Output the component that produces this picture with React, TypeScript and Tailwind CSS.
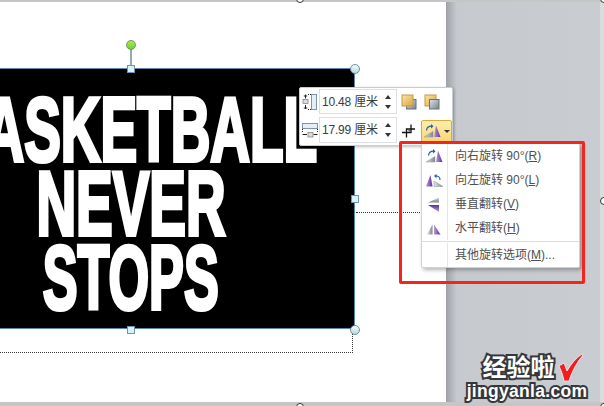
import React from "react";

const uiFont = { fontFamily: '"Liberation Sans", "Noto Sans CJK SC", sans-serif' };

const rampGray = "url(#rampGray)";
const rampPurple = "url(#rampPurple)";

function Defs() {
  return (
    <svg width="0" height="0" className="absolute">
      <defs>
        <linearGradient id="rampGray" x1="0" y1="0" x2="1" y2="0">
          <stop offset="0" stopColor="#e2e6ea" />
          <stop offset="1" stopColor="#7d8690" />
        </linearGradient>
        <linearGradient id="rampPurple" x1="0" y1="0" x2="1" y2="0">
          <stop offset="0" stopColor="#b89ad8" />
          <stop offset="1" stopColor="#5b2f96" />
        </linearGradient>
        <linearGradient id="rampGrayV" x1="0" y1="0" x2="0" y2="1">
          <stop offset="0" stopColor="#d8dce0" />
          <stop offset="1" stopColor="#7d8690" />
        </linearGradient>
        <linearGradient id="rampPurpleV" x1="0" y1="0" x2="0" y2="1">
          <stop offset="0" stopColor="#5b2f96" />
          <stop offset="1" stopColor="#c0a4dc" />
        </linearGradient>
        <linearGradient id="goldBox" x1="0" y1="0" x2="1" y2="1">
          <stop offset="0" stopColor="#fbe6a6" />
          <stop offset="1" stopColor="#d9a441" />
        </linearGradient>
        <linearGradient id="steelBox" x1="0" y1="0" x2="1" y2="1">
          <stop offset="0" stopColor="#dfe3e8" />
          <stop offset="1" stopColor="#76818e" />
        </linearGradient>
      </defs>
    </svg>
  );
}

function RotateRight() {
  return (
    <svg width="18" height="16" viewBox="0 0 18 16">
      <path d="M0 14h9V8.500z" fill={rampGray} stroke="#8a929a" strokeWidth="0.5" />
      <path d="M10 14h6.500L12 2.500z" fill={rampPurple} />
      <path d="M2.500 7.500C2.800 4.500 5 3.200 7.500 3.200" fill="none" stroke="#1f5fae" strokeWidth="1.200" />
      <path d="M7 1l2.500 2.200L7 5.400z" fill="#1f5fae" />
    </svg>
  );
}

function RotateLeft() {
  return (
    <svg width="18" height="16" viewBox="0 0 18 16">
      <path d="M0 14.500h6.500L4.500 3z" fill={rampPurple} />
      <path d="M8 14.500h9L8 9z" fill={rampGray} stroke="#8a929a" strokeWidth="0.5" />
      <path d="M14 8C14 5 12.500 4 10 4" fill="none" stroke="#1f5fae" strokeWidth="1.200" />
      <path d="M10.500 1.800L8 4l2.500 2.200z" fill="#1f5fae" />
    </svg>
  );
}

function FlipVertical() {
  return (
    <svg width="18" height="16" viewBox="0 0 18 16">
      <path d="M2 6.500h11V1.500z" fill="url(#rampGrayV)" />
      <path d="M2 9h11v7z" fill="url(#rampPurpleV)" />
    </svg>
  );
}

function FlipHorizontal() {
  return (
    <svg width="18" height="16" viewBox="0 0 18 16">
      <path d="M1 14.500h5.500V4.500z" fill={rampGray} />
      <path d="M8 14.500h6.500L8 4.500z" fill="url(#rampPurple)" />
    </svg>
  );
}

function HeightIcon() {
  return (
    <svg width="15" height="16" viewBox="0 0 15 16">
      <rect x="9.500" y="0.500" width="5" height="15" fill="#e4eef8" stroke="#7f93aa" />
      <rect x="1" y="5.500" width="5" height="4" fill="#dcdcdc" stroke="#777" strokeWidth="0.7" />
      <path d="M3.500 0.500v4M1.800 2h3.400M3.500 11v4M1.800 14h3.400" stroke="#222" strokeWidth="1" />
      <path d="M6 0.500h3M6 15.500h3" stroke="#222" strokeWidth="1" strokeDasharray="1 1" />
    </svg>
  );
}

function WidthIcon() {
  return (
    <svg width="16" height="15" viewBox="0 0 16 15">
      <rect x="0.500" y="0.500" width="15" height="5" fill="#e4eef8" stroke="#7f93aa" />
      <rect x="6" y="9.500" width="5" height="4.500" fill="#dcdcdc" stroke="#777" strokeWidth="0.7" />
      <path d="M0.500 11.500h4.500M11.500 11.500h4" stroke="#222" strokeWidth="1" />
      <path d="M0.500 6v4M15.500 6v4" stroke="#222" strokeWidth="1" strokeDasharray="1 1" />
    </svg>
  );
}

function LayerIcon({ front }: { front: "gold" | "steel" }) {
  const gold = <rect x="1" y="1" width="11" height="11" fill="url(#goldBox)" stroke="#c49a45" />;
  const steel = <rect x="5.500" y="5.500" width="9.500" height="9.500" fill="url(#steelBox)" stroke="#66717e" />;
  return (
    <svg width="16" height="16" viewBox="0 0 16 16">
      {front === "gold" ? steel : gold}
      {front === "gold" ? gold : steel}
    </svg>
  );
}

function CropIcon() {
  return (
    <svg width="14" height="14" viewBox="0 0 14 14">
      <path d="M0 8.500h9V0.500M4.500 13.500V5H13" fill="none" stroke="#111" strokeWidth="1.300" />
      <path d="M6.500 5.500h2v2h-2z" fill="#555" />
    </svg>
  );
}

function Spinner() {
  return (
    <div className="flex flex-col items-center justify-center gap-[6px] w-[12px] mr-[2px]">
      <span className="w-0 h-0 border-x-[3px] border-x-transparent border-b-[4px] border-b-[#333]" />
      <span className="w-0 h-0 border-x-[3px] border-x-transparent border-t-[4px] border-t-[#333]" />
    </div>
  );
}

function SizeRow({ icon, value, h }: { icon: React.ReactNode; value: string; h: string }) {
  return (
    <div className="flex items-center">
      <div className="w-[19px] flex justify-center">{icon}</div>
      <div className={`w-[78px] ${h} border border-[#dcdfe3] flex items-center justify-between pl-[2px]`}>
        <span className="text-[12px] text-[#3b3b3b] whitespace-nowrap tracking-[-0.2px]">{value} 厘米</span>
        <Spinner />
      </div>
    </div>
  );
}

function MenuRow({ icon, label, hot, tail }: { icon: React.ReactNode; label: string; hot: string; tail?: string }) {
  return (
    <div className="flex h-[24px] items-center">
      <div className="w-[25px] flex justify-center shrink-0">{icon}</div>
      <div className="pl-[7px] border-l border-[#e4e6e8] h-full flex items-center text-[12px] text-[#4f4f4f] whitespace-nowrap">
        {label}(<span className="underline">{hot}</span>){tail}
      </div>
    </div>
  );
}

function SquareHandle({ className }: { className: string }) {
  return <div className={`absolute w-[8px] h-[8px] border border-[#6c93b4] bg-[#d9f1f8] ${className}`} />;
}

function CircleHandle({ className }: { className: string }) {
  return (
    <div
      className={`absolute w-[10px] h-[10px] rounded-full border border-[#6f8ea6] bg-gradient-to-b from-[#f4fafb] to-[#b5d8de] ${className}`}
    />
  );
}

function Poster() {
  const line =
    "text-[90px] leading-[74px] font-bold text-white whitespace-nowrap [-webkit-text-stroke:4px_white]";
  return (
    <div className="absolute left-[-93px] top-[68px] w-[448px] h-[261px] bg-black border border-[#5b86ad] overflow-hidden flex flex-col items-center pt-[24px]">
      <div className={`${line} scale-x-[0.61]`}>BASKETBALL</div>
      <div className={`${line} scale-x-[0.61]`}>NEVER</div>
      <div className={`${line} scale-x-[0.58]`}>STOPS</div>
    </div>
  );
}

function Watermark() {
  const outline = "font-bold text-white [paint-order:stroke] [-webkit-text-stroke:4px_#34373c]";
  return (
    <div className="absolute left-[462px] top-[353px] w-[130px] flex flex-col items-center">
      <div className="flex items-center">
        <span className={`${outline} text-[24px] leading-[28px] ml-[12px]`}>经验啦</span>
        <svg width="26" height="30" viewBox="0 0 26 30" className="ml-[3px]">
          <path d="M1 13l5-3 3 8C13 11 18 5 24 1l1 1C19 9 14 18 11 28H6C5 22 3 17 1 13z" fill="#f01f1f" stroke="#fff" strokeWidth="0.7" />
        </svg>
      </div>
      <span className={`${outline} text-[17.500px] leading-[18px] tracking-[0.3px] mt-[-1px]`}>jingyanla.com</span>
    </div>
  );
}

export default function App() {
  return (
    <div className="relative w-[604px] h-[406px] overflow-hidden flex flex-col bg-white" style={uiFont}>
      <Defs />
      <div className="h-[2px] bg-[#c6c6c6] shrink-0" />
      <div className="flex-1 flex">
        <div className="w-[446px] bg-white" />
        <div className="flex-1 bg-gradient-to-r from-[#9ea2a8] via-[#c6c9ce] via-[7%] to-[#c9ccd1]" />
        <div className="w-[4px] bg-[#dadcdf]" />
      </div>
      <div className="h-[4px] bg-[#c6c6c6] shrink-0" />

      {/* dotted frame of the slide placeholder */}
      <div className="absolute left-0 top-[331px] w-[353px] h-[22px] border-r border-b border-dotted border-[#333]" />
      <div className="absolute left-[356px] top-[212px] w-[90px] border-t border-dotted border-[#333]" />

      <Poster />

      {/* rotate handle and sizing handles */}
      <div className="absolute left-[130px] top-[48px] w-[2px] h-[18px] bg-[#8fabc4]" />
      <div className="absolute left-[126px] top-[40px] w-[10px] h-[10px] rounded-full border border-[#6f9a55] bg-gradient-to-b from-[#a6ea5a] to-[#72cf2e]" />
      <SquareHandle className="left-[127px] top-[65px]" />
      <SquareHandle className="left-[127px] top-[326px]" />
      <SquareHandle className="left-[351px] top-[195px]" />
      <CircleHandle className="left-[350px] top-[64px]" />
      <CircleHandle className="left-[350px] top-[325px]" />
      <div className="absolute left-[296px] top-[-5px] w-[8px] h-[8px] rounded-full border border-[#333] bg-white" />
      <div className="absolute left-[296px] top-[403px] w-[8px] h-[8px] rounded-full border border-[#333] bg-white" />
      <div className="absolute left-[600px] top-[197px] w-[8px] h-[8px] rounded-full border border-[#333] bg-white" />
      <div className="absolute left-[600px] top-[-5px] w-[8px] h-[8px] rounded-full border border-[#333] bg-white" />
      <div className="absolute left-[600px] top-[403px] w-[8px] h-[8px] rounded-full border border-[#333] bg-white" />

      {/* mini toolbar */}
      <div className="absolute left-[299px] top-[87px] w-[154px] h-[59px] bg-white border border-[#c9cdd2] rounded-[2px] shadow-[1px_1px_3px_rgba(0,0,0,0.25)] flex flex-col pt-[1px] gap-[3px]">
        <div className="flex items-center">
          <SizeRow icon={<HeightIcon />} value="10.48" h="h-[25px]" />
          <div className="flex gap-[7px] ml-[4px]">
            <LayerIcon front="gold" />
            <LayerIcon front="steel" />
          </div>
        </div>
        <div className="flex items-center">
          <SizeRow icon={<WidthIcon />} value="17.99" h="h-[26px]" />
          <div className="ml-[5px] mt-[1px]">
            <CropIcon />
          </div>
          <div className="ml-[5px] w-[32px] h-[23px] mt-[2px] rounded-[2px] border border-[#d8a93c] bg-gradient-to-b from-[#fdeeb0] to-[#f9d56e] flex items-center justify-center gap-[2px]">
            <RotateRight />
            <span className="w-0 h-0 border-x-[3px] border-x-transparent border-t-[3px] border-t-[#333]" />
          </div>
        </div>
      </div>

      {/* rotate dropdown */}
      <div className="absolute left-[421px] top-[143px] w-[159px] h-[125px] bg-white border border-[#cfd2d6] rounded-[2px] shadow-[2px_2px_4px_rgba(0,0,0,0.3)]">
        <MenuRow icon={<RotateRight />} label="向右旋转 90°" hot="R" />
        <MenuRow icon={<RotateLeft />} label="向左旋转 90°" hot="L" />
        <MenuRow icon={<FlipVertical />} label="垂直翻转" hot="V" />
        <MenuRow icon={<FlipHorizontal />} label="水平翻转" hot="H" />
        <div className="h-[3px] flex items-center">
          <div className="flex-1 h-px bg-[#dcdee0]" />
        </div>
        <MenuRow icon={null} label="其他旋转选项" hot="M" tail="..." />
      </div>

      {/* red highlight */}
      <div className="absolute left-[399px] top-[141px] w-[186px] h-[143px] border-[3px] border-[#f5241c] rounded-[2px]" />

      <Watermark />
    </div>
  );
}
